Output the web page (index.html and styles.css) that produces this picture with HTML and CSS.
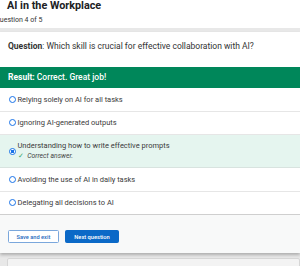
FILE: index.html
```html
<!DOCTYPE html>
<html lang="en">
<head>
    <meta charset="UTF-8">
    <meta name="viewport" content="width=device-width, initial-scale=1.0">
    <title>AI in the Workplace - Quiz</title>
    <link rel="stylesheet" href="styles.css">
</head>
<body>

<div class="quiz-head">
    <h1 class="quiz-title">AI in the Workplace</h1>
    <div class="quiz-progress">Question 4 of 5</div>
</div>

<div class="card">
    <div class="question"><b>Question</b>: Which skill is crucial for effective collaboration with AI?</div>
    <div class="result"><b>Result:</b> Correct. Great job!</div>

    <ul class="options">
        <li class="option"><span class="radio"></span><span>Relying solely on AI for all tasks</span></li>
        <li class="option"><span class="radio"></span><span>Ignoring AI-generated outputs</span></li>
        <li class="option selected">
            <span class="radio checked"></span>
            <div>
                <div>Understanding how to write effective prompts</div>
                <div class="feedback"><span class="tick">&#10003;</span> Correct answer.</div>
            </div>
        </li>
        <li class="option"><span class="radio"></span><span>Avoiding the use of AI in daily tasks</span></li>
        <li class="option"><span class="radio"></span><span>Delegating all decisions to AI</span></li>
    </ul>

    <div class="actions">
        <button class="btn btn-outline">Save and exit</button>
        <button class="btn btn-primary">Next question</button>
    </div>
</div>

<div class="next-card"></div>

</body>
</html>
```

FILE: styles.css
```css
body {
    margin: 0;
    background-color: #e8e8e8;
    font-family: Roboto, "Liberation Sans", Arial, sans-serif;
    color: #333;
}
.quiz-head {
    background-color: #fff;
    height: 28px;
    box-sizing: border-box;
}
.quiz-title {
    margin: 0;
    padding-left: 7px;
    font-size: 10.8px;
    line-height: 12px;
    font-weight: 700;
    color: #202124;
}
.quiz-progress {
    margin-top: 4px;
    margin-left: -5px;
    font-size: 7px;
    line-height: 8px;
    color: #333;
}
.card {
    margin-top: 4px;
    background-color: #fff;
    box-shadow: 0 2px 3px rgba(0, 0, 0, 0.25);
}
.question {
    padding: 9px 8px 16px;
    font-size: 8.5px;
    line-height: 10px;
}
.result {
    background-color: #00875a;
    color: #fff;
    height: 21px;
    line-height: 21px;
    padding: 0 8px;
    font-size: 8.5px;
    font-weight: 500;
}
.options {
    list-style: none;
    margin: 0;
    padding: 0;
}
.option {
    display: flex;
    align-items: center;
    height: 22.5px;
    padding-left: 9px;
    border-bottom: 1px solid #e6e6e6;
    font-size: 7.5px;
    color: #3a3a3a;
}
.option:last-child {
    border-bottom-color: #cfcfcf;
}
.option.selected {
    height: 32px;
    background-color: #e5f5ef;
    border-bottom-color: #d8e3df;
    line-height: 11px;
}
.radio {
    width: 7px;
    height: 7px;
    box-sizing: border-box;
    border: 1.3px solid #1a73e8;
    border-radius: 50%;
    margin-right: 1.5px;
    flex-shrink: 0;
    background-color: #fff;
}
.radio.checked {
    background: radial-gradient(circle, #1a73e8 0 1.6px, #fff 1.9px);
}
.feedback {
    font-style: italic;
    font-size: 6.8px;
    color: #444;
}
.tick {
    font-style: normal;
    color: #3aa76d;
    margin-right: 2px;
}
.actions {
    background-color: #f8f9f9;
    padding: 15px 8px 10px;
    display: flex;
    gap: 6px;
}
.btn {
    height: 13px;
    padding: 0 7.5px;
    font-family: Roboto, "Liberation Sans", Arial, sans-serif;
    font-size: 5.7px;
    font-weight: 500;
    border-radius: 1.5px;
    cursor: pointer;
}
.btn-outline {
    background-color: #fff;
    border: 1px solid #7aa7dc;
    color: #2a6cc0;
}
.btn-primary {
    background-color: #0b69c7;
    border: 1px solid #0b69c7;
    color: #fff;
    padding: 0 8.5px;
}
.next-card {
    margin: 5px 0 0 7px;
    height: 20px;
    background-color: #f3f3f3;
    border: 1px solid #d6d6d6;
    border-radius: 2px;
}
```
